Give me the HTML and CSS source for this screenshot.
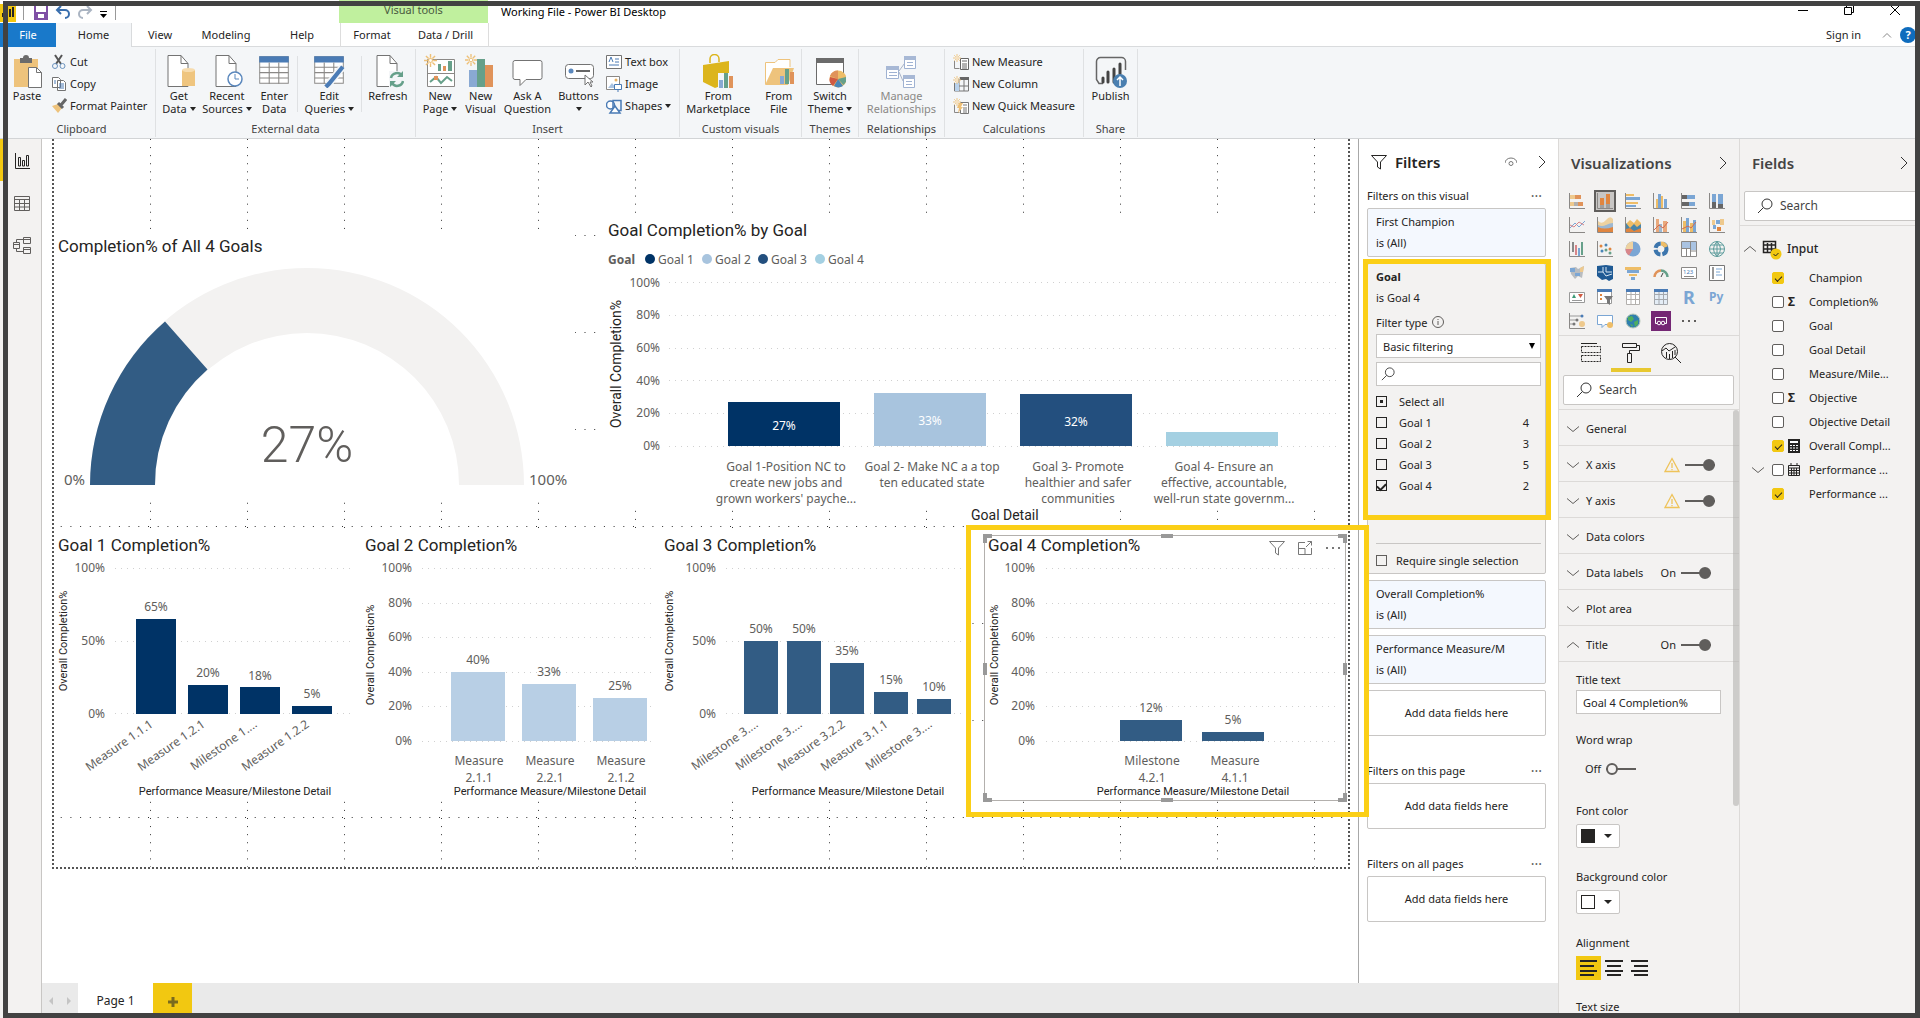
FILE: index.html
```html
<!DOCTYPE html>
<html lang="en">
<head>
	<meta charset="utf-8">
	<meta name="viewport" content="width=device-width, initial-scale=1.0">
	<title>Working File - Power BI Desktop</title>
	<link rel="stylesheet" href="styles.css">
</head>
<body>

<!-- shared icons -->
<svg class="defs" aria-hidden="true">
	<symbol id="down" viewBox="0 0 12 8"><path d="M0 1.500l6 5 6-5" fill="none" stroke="#605e5c"/></symbol>
	<symbol id="up" viewBox="0 0 12 8"><path d="M0 6.500l6-5 6 5" fill="none" stroke="#605e5c"/></symbol>
	<symbol id="right" viewBox="0 0 8 12"><path d="M1 0l6 6-6 6" fill="none" stroke="#333"/></symbol>
	<symbol id="glass" viewBox="0 0 16 16"><circle cx="10" cy="6" r="5" fill="none" stroke="#333"/><path d="M6.500 9.500L1 15" stroke="#333"/></symbol>
	<symbol id="funnel" viewBox="0 0 16 16"><path d="M.5 1.500h15L9.500 8v7L6.500 13V8z" fill="none" stroke="currentColor"/></symbol>
	<symbol id="warn" viewBox="0 0 16 16"><path d="M8 1.500l7 13H1z" fill="none" stroke="#eec35a" stroke-width="1.300"/><path d="M8 6v5M8 12v1.300" stroke="#eec35a" stroke-width="1.300"/></symbol>
	<symbol id="axes" viewBox="0 0 16 16"><path d="M.5 0v15.500H16" fill="none" stroke="#8a8886"/></symbol>
	<symbol id="star" viewBox="0 0 12 12"><path d="M6 0v3.500M6 8.500V12M0 6h3.500M8.500 6H12M1.800 1.800l2.400 2.400M7.800 7.800l2.400 2.400M10.200 1.800L7.800 4.200M4.200 7.800l-2.400 2.400" stroke="#eec077" stroke-width="1.300"/><circle cx="6" cy="6" r="1.800" fill="#fff" stroke="#eec077"/></symbol>
	<symbol id="page" viewBox="0 0 32 34"><path d="M5 1.500h13l7 8v23H5z" fill="#fff" stroke="#737373"/><path d="M18 1.500v8h7" fill="none" stroke="#737373"/></symbol>
	<symbol id="grid" viewBox="0 0 28 32"><path d="M.5 2.500h27v25H.5z" fill="#fff" stroke="#8a8886"/><path d="M0 2h28v6H0z" fill="#4a7bb5"/><path d="M.5 12.500h27m-27 5h27m-27 5h27M9.500 8v20M18.500 8v20" stroke="#8a8886" fill="none"/></symbol>
	<symbol id="minibars" viewBox="0 0 15 15"><path d="M0 7h4v8H0z" fill="#89a9d3"/><path d="M5 0h4v15H5z" fill="#66a08a"/><path d="M10 3h4v12h-4z" fill="#e0935a"/></symbol>
	<symbol id="calc" viewBox="0 0 12 14"><path d="M0 0h12v14H0z" fill="#252423"/><path d="M2 2h8v2H2zM2 6h2v1H2zm3 0h2v1H5zm3 0h2v1H8zM2 8.500h2v1H2zm3 0h2v1H5zm3 0h2v1H8zM2 11h2v1H2zm3 0h2v1H5zm3 0h2v1H8z" fill="#fff"/></symbol>
</svg>

<div class="app">
	<header class="titlebar">
		<svg class="quick" viewBox="0 0 120 23">
			<path d="M0 4h16v18H0z" fill="#f2c811"/><path d="M3 17v-4m3 4v-6m4 6V9m3 8V7" stroke="#252423" stroke-width="2"/>
			<path d="M23.500 6v14M115.500 6v14" stroke="#999"/>
			<path d="M35 6v13h12V6M37 19v-6h8v6" fill="none" stroke="#7f4fa5" stroke-width="2"/>
			<path d="M58 10h7a4 4 0 0 1 0 8M61 6l-4 4 4 4" fill="none" stroke="#3a6fae" stroke-width="2"/>
			<path d="M90 10h-7a4 4 0 0 0 0 8M87 6l4 4-4 4" fill="none" stroke="#aab4c2" stroke-width="2"/>
			<path d="M100 11.500h7" stroke="#000"/><path d="M100 14h7l-3.500 4z"/>
		</svg>
		<span class="tools">Visual tools</span>
		<span class="filename">Working File - Power BI Desktop</span>
		<div class="window">
			<button aria-label="Minimize"><svg viewBox="0 0 12 12"><path d="M1 6.500h10" stroke="#000"/></svg></button>
			<button aria-label="Restore"><svg viewBox="0 0 12 12"><path d="M1.500 3.500h7v7h-7zM3.500 3V1.500h7v7H9" fill="none" stroke="#000"/></svg></button>
			<button aria-label="Close"><svg viewBox="0 0 12 12"><path d="M1 1l10 10M11 1L1 11" stroke="#000"/></svg></button>
		</div>
	</header>

	<nav class="tabs">
		<button class="tab file">File</button>
		<button class="tab home">Home</button>
		<button class="tab view">View</button>
		<button class="tab wide">Modeling</button>
		<button class="tab wide">Help</button>
		<button class="tab context">Format</button>
		<button class="tab drill">Data / Drill</button>
		<div class="account">
			<a href="#">Sign in</a>
			<svg class="chev" viewBox="0 0 12 8"><path d="M2 6.500l4-4 4 4" fill="none" stroke="#888"/></svg>
			<button class="help">?</button>
		</div>
	</nav>

	<div class="ribbon">
		<section class="group clipboard">
			<div class="tools-row">
				<button class="big"><svg viewBox="0 0 32 34"><path d="M3 5h24v28H3z" fill="#eec37c"/><path d="M9 4h3a3 3 0 0 1 6 0h3v5H9z" fill="#6b6b6b"/><path d="M17.500 13.500h8l5 5v15h-13z" fill="#fff" stroke="#737373"/><path d="M25.500 13.500v5h5" fill="none" stroke="#737373"/></svg>Paste</button>
				<div class="stack">
					<button><svg viewBox="0 0 16 16"><path d="M4 1l6 9M11 1L5 10" stroke="#555" stroke-width="2"/><circle cx="4" cy="12" r="2.500" fill="none" stroke="#6b93bf"/><circle cx="11.500" cy="12" r="2.500" fill="none" stroke="#6b93bf"/></svg>Cut</button>
					<button><svg viewBox="0 0 16 16"><path d="M1.500 1.500h6l2 2v8h-8zM6.500 4.500h6l2 2v8h-8z" fill="#fff" stroke="#737373"/><path d="M3 5h2M3 7h2M8 8h5m-5 2h5m-5 2h5" stroke="#4a7bb5"/></svg>Copy</button>
					<button><svg viewBox="0 0 16 16"><path d="M1 8l6-2 4 4-4 5z" fill="#eec37c"/><path d="M7 5l5 5M10 7l5-6" stroke="#666" stroke-width="3"/></svg>Format Painter</button>
				</div>
			</div>
			<h2>Clipboard</h2>
		</section>
		<section class="group external">
			<div class="tools-row">
				<button class="big"><svg viewBox="0 0 32 34"><use href="#page"/><path d="M19 16h13v16H19z" fill="#efc57f"/><ellipse cx="25.500" cy="16" rx="6.500" ry="2" fill="#f7dcae"/></svg>Get<span>Data <i></i></span></button>
				<button class="big"><svg viewBox="0 0 32 34"><use href="#page"/><circle cx="24" cy="25" r="7" fill="#fff" stroke="#5b88bd" stroke-width="1.500"/><path d="M24 20v5h4" fill="none" stroke="#5b88bd"/></svg>Recent<span>Sources <i></i></span></button>
				<button class="big"><svg viewBox="0 0 28 32"><use href="#grid"/></svg>Enter<span>Data</span></button>
				<hr>
				<button class="big"><svg viewBox="0 0 28 32"><use href="#grid"/><path d="M27 12L13 29" stroke="#f4f6f8" stroke-width="7"/><path d="M27 12L14 28l-3 3" stroke="#4a7bb5" stroke-width="4"/></svg>Edit<span>Queries <i></i></span></button>
				<hr>
				<button class="big"><svg viewBox="0 0 32 34"><use href="#page"/><path d="M17 17h15v17H17z" fill="#f4f6f8"/><path d="M19 24a6 6 0 0 1 11-2M31 27a6 6 0 0 1-11 2" fill="none" stroke="#66a08a" stroke-width="2.500"/><path d="M31 17v6h-6zM18 33v-6h6z" fill="#66a08a"/></svg>Refresh</button>
			</div>
			<h2>External data</h2>
		</section>
		<section class="group insert">
			<div class="tools-row">
				<button class="big"><svg viewBox="0 0 32 34"><path d="M3.500 5.500h27v27h-27zM3 19.500h28" fill="#fff" stroke="#8a8886"/><path d="M6 28l6-5 5 6 6-6 5 4" fill="none" stroke="#66a08a" stroke-width="2"/><path d="M10 22h4v4h-4z" fill="#e0935a"/><path d="M14 10h3v7h-3zm10-3h4v10h-4z" fill="#66a08a"/><path d="M19 12h3v5h-3z" fill="#e0935a"/><use href="#star" x="0" y="0" width="13" height="13"/></svg>New<span>Page <i></i></span></button>
				<button class="big"><svg viewBox="0 0 32 34"><path d="M4 16h8v17H4z" fill="#89a9d3"/><path d="M12 5h8v28h-8z" fill="#66a08a"/><path d="M20 11h8v22h-8z" fill="#e0935a"/><use href="#star" x="0" y="0" width="12" height="12"/></svg>New<span>Visual</span></button>
				<button class="big"><svg viewBox="0 0 32 34"><path d="M4 6.500h25a2 2 0 0 1 2 2v15a2 2 0 0 1-2 2H15l-6 6v-6H4a2 2 0 0 1-2-2v-15a2 2 0 0 1 2-2z" fill="#fff" stroke="#737373"/></svg>Ask A<span>Question</span></button>
				<button class="big"><svg viewBox="0 0 32 34"><rect x="2.500" y="10.500" width="28" height="14" rx="3" fill="#fff" stroke="#737373"/><circle cx="8" cy="17" r="2.500" fill="#5b88bd"/><path d="M13 17h14" stroke="#666" stroke-width="2"/><path d="M22 21v10l3-3 3 5 1-1-2-4h3z" fill="#fff" stroke="#737373"/></svg>Buttons<span><i></i></span></button>
				<div class="stack">
					<button><svg viewBox="0 0 16 16"><path d="M.5 1.500h15v13H.5z" fill="#fff" stroke="#737373"/><path d="M3 8l2-5 2 5M9 5h4M9 8h4M3 11h10" fill="none" stroke="#4a7bb5"/></svg>Text box</button>
					<button><svg viewBox="0 0 16 16"><path d="M.5.5h13v13H.5z" fill="#fff" stroke="#8a8886"/><path d="M2 12l4-5 4 5z" fill="#a9c3e2"/><circle cx="10" cy="4" r="1.500" fill="#e8b063"/><path d="M8.500 8.500h7v5h-7zM12 14v2" fill="#fff" stroke="#4a7bb5"/></svg>Image</button>
					<button><svg viewBox="0 0 16 16"><circle cx="4.500" cy="7" r="4" fill="#fff" stroke="#4a7bb5" stroke-width="1.500"/><path d="M7 2.500h8v10H7z" fill="none" stroke="#4a7bb5" stroke-width="1.500"/><path d="M9 8l5 7H4z" fill="#fff" stroke="#4a7bb5" stroke-width="1.500"/></svg>Shapes <i></i></button>
				</div>
			</div>
			<h2>Insert</h2>
		</section>
		<section class="group custom">
			<div class="tools-row">
				<button class="big"><svg viewBox="0 0 32 34"><path d="M8 9V5a4 4 0 0 1 9 0v3" fill="none" stroke="#dcb51c" stroke-width="1.500"/><path d="M1 11l26-4v22l-14 5-12-6z" fill="#dcb51c"/><path d="M16 19h16v14H16z" fill="#f4f6f8"/><use href="#minibars" x="17" y="19" width="15" height="15"/></svg>From<span>Marketplace</span></button>
				<button class="big"><svg viewBox="0 0 32 34"><path d="M2.500 30V8.500H12l3-3h12V13" fill="#fff" stroke="#eec37c"/><path d="M2 31l8-17h21l-6 17z" fill="#eec37c"/><use href="#minibars" x="17" y="15" width="15" height="15"/></svg>From<span>File</span></button>
			</div>
			<h2>Custom visuals</h2>
		</section>
		<section class="group themes">
			<div class="tools-row">
				<button class="big"><svg viewBox="0 0 32 34"><path d="M2.500 4.500h27v26h-27z" fill="#fff" stroke="#6b6b6b"/><path d="M2 4h28v5H2z" fill="#6b6b6b"/><circle cx="24" cy="25" r="8.500" fill="#eebd67"/><path d="M24 25l-8-3a8.500 8.500 0 0 1 8-5.500z" fill="#e0935a"/><path d="M24 25l8.500-2a9 9 0 0 1-3 8z" fill="#66a08a"/><path d="M24 25l5 7a8.500 8.500 0 0 1-9 0z" fill="#4a86b8"/><path d="M24 25l-5 7a8 8 0 0 1-3-9z" fill="#d05a42"/></svg>Switch<span>Theme <i></i></span></button>
			</div>
			<h2>Themes</h2>
		</section>
		<section class="group relations">
			<div class="tools-row">
				<button class="big muted" disabled><svg viewBox="0 0 32 34"><path d="M14 17l8-11M14 18l4 9" stroke="#a9b4c8"/><path d="M1.500 12.500h12v12h-12zM19.500 2.500h11v12h-11zM18.500 21.500h11v12h-11z" fill="#fff" stroke="#9fb2d2"/><path d="M1 12h13v4H1zM19 2h12v4H19zM18 21h12v4H18z" fill="#a7b8d5"/><path d="M4 18.500h8m-8 3h8M22 8.500h6m-6 3h6M21 27.500h6m-6 3h6" stroke="#9fb2d2"/></svg>Manage<span>Relationships</span></button>
			</div>
			<h2>Relationships</h2>
		</section>
		<section class="group calcs">
			<div class="tools-row">
				<div class="stack">
					<button><svg viewBox="0 0 16 16"><path d="M1.500 7v7.500h5" fill="none" stroke="#8a8886"/><path d="M7.500 4.500h8v11h-8z" fill="#fff" stroke="#666"/><path d="M9 7h5M9 10h5m-5 2h5m-5 2h5" stroke="#666"/><use href="#star" width="8" height="8"/></svg>New Measure</button>
					<button><svg viewBox="0 0 16 16"><path d="M1.500 7v8h14V3h-9M6 15V3M1.500 10h14M11 3v12" fill="none" stroke="#777"/><path d="M2 7h4v8H2z" fill="#b9d2ec"/><path d="M7 1h9v3H7z" fill="#666"/><use href="#star" width="8" height="8"/></svg>New Column</button>
					<button><svg viewBox="0 0 16 16"><path d="M1.500 7v7.500h5" fill="none" stroke="#8a8886"/><path d="M7.500 4.500h8v11h-8z" fill="#fff" stroke="#777"/><path d="M10 7h4m-4 3h4m-4 2h4m-4 2h4" stroke="#777"/><path d="M6 5l4 0-2 4h2l-5 6 1-5H4z" fill="#eec077"/><use href="#star" width="8" height="8"/></svg>New Quick Measure</button>
				</div>
			</div>
			<h2>Calculations</h2>
		</section>
		<section class="group share">
			<div class="tools-row">
				<button class="big"><svg viewBox="0 0 32 34"><path d="M8 29.500H4l-2.500-4v-18a4 4 0 0 1 4-4h21a4 4 0 0 1 4 4V16" fill="none" stroke="#666" stroke-width="1.500"/><path d="M8 28v-4m5 4V18m6 10V15m6 5V10" stroke="#444" stroke-width="3" stroke-linecap="round"/><circle cx="25" cy="27" r="7" fill="#4a7fb0"/><path d="M25 32v-9m-3 3l3-3 3 3" fill="none" stroke="#fff" stroke-width="1.500"/></svg>Publish</button>
			</div>
			<h2>Share</h2>
		</section>
	</div>

	<div class="body">
		<nav class="views">
			<button aria-label="Report"><svg viewBox="0 0 18 18"><path d="M2.500 1v15.500H17M5.500 14V5.500h2V14zM9.500 14V8.500h2V14zM13.500 14V3.500h2V14z" fill="none" stroke="#252423"/></svg></button>
			<button aria-label="Data"><svg viewBox="0 0 18 18"><path d="M1.500 2.500h15v14h-15zM1.500 5.500h15m-15 4h15m-15 3.500h15M6.500 5v11M11.500 5v11" fill="none" stroke="#605e5c"/></svg></button>
			<button aria-label="Model"><svg viewBox="0 0 18 18"><path d="M.5 6.500h6v6h-6zM10.500 1.500h7v6h-7zM10.500 11.500h7v6h-7zM.5 8.500h6M10.500 3.500h7M10.500 13.500h7M3.500 6V3.500h7M3.500 13v2.500h7" fill="none" stroke="#605e5c"/></svg></button>
		</nav>

		<div class="center">
			<div class="work">
				<main class="canvas">
					<div class="report">
						<svg class="snap" aria-hidden="true">
							<pattern id="dots" x="0" y="0" width="97" height="97" patternUnits="userSpaceOnUse">
								<path d="M96.500 0v97" stroke="#333" stroke-dasharray="1 7.083" stroke-dashoffset="0"/>
								<path d="M0 97h97" stroke="#333" stroke-width="2" stroke-dasharray="1 8.700" stroke-dashoffset="3"/>
							</pattern>
							<rect width="100%" height="100%" fill="url(#dots)"/>
						</svg>

						<div class="top-row">
							<article class="visual gauge">
								<h3>Completion% of All 4 Goals</h3>
								<svg class="chart" viewBox="54 259 521 241">
									<path d="M90 485a217 217 0 0 1 434 0h-65a152 152 0 0 0-304 0z" fill="#f3f2f1"/>
									<path d="M90 485a217 217 0 0 1 75-163.500l42.500 48A152 152 0 0 0 155 485z" fill="#325c84"/>
									<text x="307" y="462" class="callout mid">27%</text>
									<text x="85" y="485" class="limit end">0%</text>
									<text x="529" y="485" class="limit">100%</text>
								</svg>
							</article>

							<article class="visual by-goal">
								<h3>Goal Completion% by Goal</h3>
								<svg class="chart" viewBox="602 245 746 260">
									<g class="legend">
										<text x="608" y="264" class="bold">Goal</text>
										<circle cx="650" cy="259" r="5" fill="#036"/><text x="658" y="264">Goal 1</text>
										<circle cx="707" cy="259" r="5" fill="#a8c4de"/><text x="715" y="264">Goal 2</text>
										<circle cx="763" cy="259" r="5" fill="#234f7e"/><text x="771" y="264">Goal 3</text>
										<circle cx="820" cy="259" r="5" fill="#a4d0e2"/><text x="828" y="264">Goal 4</text>
									</g>
									<path class="lines" d="M669 282.500h672M669 315.500h672M669 348.500h672M669 380.500h672M669 413.500h672M669 446.500h672"/>
									<g class="end">
										<text x="660" y="287">100%</text><text x="660" y="319">80%</text><text x="660" y="352">60%</text>
										<text x="660" y="385">40%</text><text x="660" y="417">20%</text><text x="660" y="450">0%</text>
									</g>
									<text class="ytitle large" transform="translate(621 364) rotate(-90)">Overall Completion%</text>
									<path d="M728 402h112v44H728z" fill="#036"/>
									<path d="M874 393h112v53H874z" fill="#a8c4de"/>
									<path d="M1020 394h112v52h-112z" fill="#234f7e"/>
									<path d="M1166 432h112v14h-112z" fill="#a4d0e2"/>
									<g class="mid white"><text x="784" y="430">27%</text><text x="930" y="425">33%</text><text x="1076" y="426">32%</text></g>
									<g class="mid">
										<text x="786" y="471">Goal 1-Position NC to</text><text x="786" y="487">create new jobs and</text><text x="786" y="503">grown workers' payche...</text>
										<text x="932" y="471">Goal 2- Make NC a a top</text><text x="932" y="487">ten educated state</text>
										<text x="1078" y="471">Goal 3- Promote</text><text x="1078" y="487">healthier and safer</text><text x="1078" y="503">communities</text>
										<text x="1224" y="471">Goal 4- Ensure an</text><text x="1224" y="487">effective, accountable,</text><text x="1224" y="503">well-run state governm...</text>
									</g>
								</svg>
							</article>
						</div>

						<div class="bottom-row">
							<article class="visual goal1">
								<h3>Goal 1 Completion%</h3>
								<svg class="chart" viewBox="54 560 307 241">
									<path class="lines" d="M115 568.500h239M115 641.500h239M115 713.500h239"/>
									<g class="end"><text x="105" y="572">100%</text><text x="105" y="645">50%</text><text x="105" y="718">0%</text></g>
									<text class="ytitle" transform="translate(67 641) rotate(-90)">Overall Completion%</text>
									<path d="M136 619h40v95h-40zM188 685h40v29h-40zM240 687h40v27h-40zM292 706h40v8h-40z" fill="#036"/>
									<g class="mid"><text x="156" y="611">65%</text><text x="208" y="677">20%</text><text x="260" y="680">18%</text><text x="312" y="698">5%</text></g>
									<g class="end">
										<text transform="translate(154 726) rotate(-35)">Measure 1.1.1</text>
										<text transform="translate(206 726) rotate(-35)">Measure 1.2.1</text>
										<text transform="translate(258 726) rotate(-35)">Milestone 1....</text>
										<text transform="translate(310 726) rotate(-35)">Measure 1.2.2</text>
									</g>
									<text class="xtitle" x="235" y="795">Performance Measure/Milestone Detail</text>
								</svg>
							</article>

							<article class="visual goal2">
								<h3>Goal 2 Completion%</h3>
								<svg class="chart" viewBox="361 560 299 241">
									<path class="lines" d="M422 568.500h233M422 603.500h233M422 637.500h233M422 672.500h233M422 706.500h233M422 741.500h233"/>
									<g class="end"><text x="412" y="572">100%</text><text x="412" y="607">80%</text><text x="412" y="641">60%</text><text x="412" y="676">40%</text><text x="412" y="710">20%</text><text x="412" y="745">0%</text></g>
									<text class="ytitle" transform="translate(374 655) rotate(-90)">Overall Completion%</text>
									<path d="M451 672h54v69h-54zM522 684h54v57h-54zM593 698h54v43h-54z" fill="#b8cfe5"/>
									<g class="mid"><text x="478" y="664">40%</text><text x="549" y="676">33%</text><text x="620" y="690">25%</text>
										<text x="479" y="765">Measure</text><text x="479" y="782">2.1.1</text>
										<text x="550" y="765">Measure</text><text x="550" y="782">2.2.1</text>
										<text x="621" y="765">Measure</text><text x="621" y="782">2.1.2</text></g>
									<text class="xtitle" x="550" y="795">Performance Measure/Milestone Detail</text>
								</svg>
							</article>

							<article class="visual goal3">
								<h3>Goal 3 Completion%</h3>
								<svg class="chart" viewBox="660 560 309 241">
									<path class="lines" d="M726 568.500h238M726 641.500h238M726 713.500h238"/>
									<g class="end"><text x="716" y="572">100%</text><text x="716" y="645">50%</text><text x="716" y="718">0%</text></g>
									<text class="ytitle" transform="translate(673 641) rotate(-90)">Overall Completion%</text>
									<path d="M744 641h34v73h-34zM787 641h34v73h-34zM830 663h34v51h-34zM874 692h34v22h-34zM917 699h34v15h-34z" fill="#325c84"/>
									<g class="mid"><text x="761" y="633">50%</text><text x="804" y="633">50%</text><text x="847" y="655">35%</text><text x="891" y="684">15%</text><text x="934" y="691">10%</text></g>
									<g class="end">
										<text transform="translate(759 726) rotate(-35)">Milestone 3....</text>
										<text transform="translate(803 726) rotate(-35)">Milestone 3....</text>
										<text transform="translate(846 726) rotate(-35)">Measure 3.2.2</text>
										<text transform="translate(889 726) rotate(-35)">Measure 3.1.1</text>
										<text transform="translate(933 726) rotate(-35)">Milestone 3....</text>
									</g>
									<text class="xtitle" x="848" y="795">Performance Measure/Milestone Detail</text>
								</svg>
							</article>

							<div class="detail">
								<p>Goal Detail</p>
								<article class="visual selected">
									<header>
										<h3>Goal 4 Completion%</h3>
										<svg class="icon16" viewBox="0 0 16 16"><use href="#funnel"/></svg>
										<svg class="icon16" viewBox="0 0 16 16"><path d="M8 2.500H1.500v12h13V8M1.500 8.500H8v6M9 7l5.500-5.500M10.500 1.500h4v4" fill="none" stroke="currentColor"/></svg>
										<svg class="icon16" viewBox="0 0 16 16"><path d="M1 7h2v2H1zm6 0h2v2H7zm6 0h2v2h-2z" fill="#777"/></svg>
									</header>
									<svg class="chart" viewBox="985 560 360 240">
										<path class="lines" d="M1046 568.500h294M1046 603.500h294M1046 637.500h294M1046 672.500h294M1046 706.500h294M1046 741.500h294"/>
										<g class="end"><text x="1035" y="572">100%</text><text x="1035" y="607">80%</text><text x="1035" y="641">60%</text><text x="1035" y="676">40%</text><text x="1035" y="710">20%</text><text x="1035" y="745">0%</text></g>
										<text class="ytitle" transform="translate(998 655) rotate(-90)">Overall Completion%</text>
										<path d="M1120 720h62v21h-62zM1202 732h62v9h-62z" fill="#325c84"/>
										<g class="mid"><text x="1151" y="712">12%</text><text x="1233" y="724">5%</text>
											<text x="1152" y="765">Milestone</text><text x="1152" y="782">4.2.1</text>
											<text x="1235" y="765">Measure</text><text x="1235" y="782">4.1.1</text></g>
										<text class="xtitle" x="1193" y="795">Performance Measure/Milestone Detail</text>
									</svg>
									<b class="handle tl"></b><b class="handle tm"></b><b class="handle tr"></b>
									<b class="handle ml"></b><b class="handle mr"></b>
									<b class="handle bl"></b><b class="handle bm"></b><b class="handle br"></b>
									<div class="mark chart-mark"></div>
								</article>
							</div>
						</div>
					</div>
				</main>

				<aside class="filters">
					<header>
						<svg class="icon16" viewBox="0 0 16 16"><use href="#funnel"/></svg>
						<h2>Filters</h2>
						<svg class="icon12" viewBox="0 0 12 12"><path d="M0 7a6 5 0 0 1 12 0" fill="none" stroke="#777"/><circle cx="6" cy="7.500" r="2" fill="none" stroke="#777"/></svg>
						<svg class="chev-r" viewBox="0 0 8 12"><use href="#right"/></svg>
					</header>
					<h4>Filters on this visual <span>···</span></h4>
					<div class="card"><p>First Champion</p><p>is (All)</p></div>
					<div class="card open">
						<p class="bold">Goal</p>
						<p>is Goal 4</p>
						<label class="type" for="ftype">Filter type <svg viewBox="0 0 12 12"><circle cx="6" cy="6" r="5.500" fill="none" stroke="#605e5c"/><path d="M6 5v4M6 3v1" stroke="#605e5c"/></svg></label>
						<div class="select"><select id="ftype"><option>Basic filtering</option></select></div>
						<div class="search small"><svg viewBox="0 0 16 16"><use href="#glass"/></svg><input type="text" aria-label="Search values"></div>
						<div class="list">
							<label><input type="checkbox" class="box some">Select all</label>
							<label><input type="checkbox" class="box">Goal 1<span>4</span></label>
							<label><input type="checkbox" class="box">Goal 2<span>3</span></label>
							<label><input type="checkbox" class="box">Goal 3<span>5</span></label>
							<label><input type="checkbox" class="box" checked>Goal 4<span>2</span></label>
						</div>
						<label class="single"><input type="checkbox" class="box thin">Require single selection</label>
						<div class="mark filter-mark"></div>
					</div>
					<div class="card"><p>Overall Completion%</p><p>is (All)</p></div>
					<div class="card"><p class="clip">Performance Measure/M</p><p>is (All)</p></div>
					<div class="card drop">Add data fields here</div>
					<h4>Filters on this page <span>···</span></h4>
					<div class="card drop">Add data fields here</div>
					<h4>Filters on all pages <span>···</span></h4>
					<div class="card drop">Add data fields here</div>
				</aside>
			</div>

			<footer class="pages">
				<button class="arrow" aria-label="Previous page"><svg viewBox="0 0 6 8"><path d="M5 0v8L1 4z" fill="#c4c4c4"/></svg></button>
				<button class="arrow" aria-label="Next page"><svg viewBox="0 0 6 8"><path d="M1 0v8l4-4z" fill="#c4c4c4"/></svg></button>
				<button class="pagetab">Page 1</button>
				<button class="add" aria-label="New page"><svg viewBox="0 0 12 12"><path d="M6 1v10M1 6h10" stroke="#7a6b1e" stroke-width="3"/></svg></button>
			</footer>
		</div>

		<aside class="viz">
			<header><h2>Visualizations</h2><svg class="chev-r" viewBox="0 0 8 12"><use href="#right"/></svg></header>
			<div class="palette">
				<svg viewBox="0 0 16 16"><use href="#axes"/><path d="M1 2h5v4H1zM1 9h4v4H1z" fill="#eec98d"/><path d="M6 2h6v4H6zM9 9h5v4H9z" fill="#e0935a"/><path d="M5 9h4v4H5z" fill="#b3b0ad"/></svg>
				<svg class="on" viewBox="0 0 16 16"><use href="#axes"/><path d="M3 5h4v7H3zM9 1h4v10H9z" fill="#e0853f"/><path d="M3 12h4v3H3zM9 11h4v4H9z" fill="#a19f9d"/></svg>
				<svg viewBox="0 0 16 16"><use href="#axes"/><path d="M1 1h8v2H1zM1 9h12v2H1z" fill="#eebd67"/><path d="M1 4h14v3H1zM1 12h10v2H1z" fill="#7ba6d4"/></svg>
				<svg viewBox="0 0 16 16"><use href="#axes"/><path d="M3 6h2v9H3zM8 3h2v12H8z" fill="#eebd67"/><path d="M5 1h3v14H5zM11 6h3v9h-3z" fill="#7ba6d4"/></svg>
				<svg viewBox="0 0 16 16"><use href="#axes"/><path d="M1 2h5v4H1zM1 9h7v4H1z" fill="#666"/><path d="M6 2h8v4H6zM8 9h6v4H8z" fill="#7ba6d4"/></svg>
				<svg viewBox="0 0 16 16"><use href="#axes"/><path d="M3 1h4v8H3zM9 1h5v10H9z" fill="#7ba6d4"/><path d="M3 9h4v6H3zM9 11h5v4H9z" fill="#666"/></svg>

				<svg viewBox="0 0 16 16"><use href="#axes"/><path d="M1 11l5-5 4 4 6-6" fill="none" stroke="#7ba6d4"/><path d="M1 8l4 2 5-5 5 3" fill="none" stroke="#d9868a"/></svg>
				<svg viewBox="0 0 16 16"><use href="#axes"/><path d="M1 4q4 4 8-1t7-1v12H1z" fill="#eed2a0"/><path d="M1 8q4 2 8 0t7-2v9H1z" fill="#9db8d2"/><path d="M1 10q6 3 15 0v5H1z" fill="#e0853f"/></svg>
				<svg viewBox="0 0 16 16"><use href="#axes"/><path d="M1 7l4-4 4 3 3-4 4 4v9H1z" fill="#eebd67"/><path d="M1 6l4 5 4-4 3 3 4-3v5l-5 2H1z" fill="#4a86a8"/><path d="M1 12l4-1 4 3 7-3v4H1z" fill="#e0853f"/></svg>
				<svg viewBox="0 0 16 16"><use href="#axes"/><path d="M3 2h3v13H3zM10 4h4v11h-4z" fill="#e9a97c"/><path d="M6 7h3v8H6z" fill="#9db8d2"/><path d="M1 13l5-5 4 3 5-6" fill="none" stroke="#d06a52"/></svg>
				<svg viewBox="0 0 16 16"><use href="#axes"/><path d="M2 4h3v11H2zM9 6h3v9H9z" fill="#eebd67"/><path d="M5 1h3v14H5zM12 3h3v12h-3z" fill="#7ba6d4"/><path d="M1 12l6-3 3 2 5-6" fill="none" stroke="#d06a52"/></svg>
				<svg viewBox="0 0 16 16"><use href="#axes"/><path d="M3 3h3v5H3zM11 2h4v6h-4z" fill="#eec98d"/><path d="M4 8h3v4H4zM7 3h4v4H7z" fill="#7ba6d4"/><path d="M8 10h4v4H8z" fill="#e0853f"/></svg>

				<svg viewBox="0 0 16 16"><use href="#axes"/><path d="M3 1h2v10H3z" fill="#888"/><path d="M6 4h2v10H6z" fill="#d9868a"/><path d="M9 7h2v8H9z" fill="#7ba6d4"/><path d="M12 1h2v13h-2z" fill="#66a08a"/></svg>
				<svg viewBox="0 0 16 16"><use href="#axes"/><g fill="#e0853f"><circle cx="4" cy="5" r="1.500"/><circle cx="13" cy="8" r="1.500"/></g><g fill="#4a86b8"><circle cx="9" cy="4" r="1.500"/><circle cx="5" cy="10" r="1.500"/></g><g fill="#66a08a"><circle cx="9" cy="9" r="1.500"/><circle cx="13" cy="12" r="1.500"/></g></svg>
				<svg viewBox="0 0 16 16"><circle cx="8" cy="8" r="7.500" fill="#7ba6d4"/><path d="M8 8V.5A7.500 7.500 0 0 0 .5 8z" fill="#eed2a0"/><path d="M8 8H.5A7.500 7.500 0 0 0 4 14.500z" fill="#d9868a"/></svg>
				<svg viewBox="0 0 16 16"><circle cx="8" cy="8" r="5.500" fill="none" stroke="#3d76ad" stroke-width="4" stroke-dasharray="7 2"/><path d="M8 2.500A5.500 5.500 0 0 1 13 6" fill="none" stroke="#eebd67" stroke-width="4"/></svg>
				<svg viewBox="0 0 16 16"><path d="M.5.500h15v15H.5z" fill="#fff" stroke="#8a8886"/><path d="M1 1h8v6H1zM10 1h5v8h-5z" fill="#a9c3e2"/><path d="M9.500 0v16M0 7.500h9.500M5.500 8v7M9.500 10h6" stroke="#8a8886"/></svg>
				<svg viewBox="0 0 16 16"><path d="M8 .5a7.500 7.500 0 1 0 0 15 7.500 7.500 0 0 0 0-15zM8 .5v15M.5 8h15M2 4h12M2 12h12M8 .5q-7 7.500 0 15M8 .5q7 7.500 0 15" fill="none" stroke="#5c9c9c"/></svg>

				<svg viewBox="0 0 16 16"><path d="M1 3l6-1 2 2 6-3-1 6-1 6-4-2-3 3-4-5z" fill="#b8bcc0"/><path d="M1 3h5v4H1z" fill="#7ba6d4"/><path d="M11 3l4-2-1 6h-3z" fill="#eec98d"/><path d="M6 8h5v3H6z" fill="#7ba6d4"/></svg>
				<svg viewBox="0 0 16 16"><path d="M0 1l9-1 7 1v13l-4 2-3-2-4 1-5-4z" fill="#1f5a94"/><path d="M1 7h5V2M6 7l3 4 6-2M9 2v5h6" fill="none" stroke="#d8e6f2"/></svg>
				<svg viewBox="0 0 16 16"><path d="M0 2h16v3H0zM4 9h8v2H4z" fill="#eebd67"/><path d="M2 5h12v3H2zM6 12h4v3H6z" fill="#7ba6d4"/></svg>
				<svg viewBox="0 0 16 16"><path d="M1.500 12A6.500 6.500 0 0 1 8 5.500" fill="none" stroke="#e0935a" stroke-width="2.500"/><path d="M8 5.500A6.500 6.500 0 0 1 14.500 12" fill="none" stroke="#66a08a" stroke-width="2.500"/><path d="M8 12l2-4" stroke="#444"/></svg>
				<svg viewBox="0 0 16 16"><path d="M.5 2.500h15v11H.5zM3 11.500h10" fill="#fff" stroke="#8a8886"/><text x="2" y="9" class="tiny">123</text></svg>
				<svg viewBox="0 0 16 16"><path d="M.5.500h15v15H.5z" fill="#fff" stroke="#777"/><path d="M3 2h2v12H3z" fill="#999"/><path d="M7 4h6M7 7h4M7 10h6" stroke="#7ba6d4"/></svg>

				<svg viewBox="0 0 16 16"><path d="M.5 3.500h15v10H.5zM3 11.500h10" fill="#fff" stroke="#999"/><path d="M3 9l2-4 2 4z" fill="#3d9a76"/><path d="M9 5h5l-2.500 4z" fill="#d05a42"/></svg>
				<svg viewBox="0 0 16 16"><path d="M.5 1.500h14v13H.5z" fill="#fff" stroke="#999"/><path d="M0 0h15v3H0z" fill="#4a7bb5"/><path d="M3 5h2v2H3zm0 4h2v2H3z" fill="#e0853f"/><path d="M7 7h9l-3 4v5l-3-2v-3z" fill="#777"/></svg>
				<svg viewBox="0 0 16 16"><path d="M1.500.500h13v15h-13zM1.500 5.500h13m-13 5h13M6 2v13M10.500 2v13" fill="#fff" stroke="#b3b0ad"/><path d="M1 0h14v3H1z" fill="#4a7bb5"/></svg>
				<svg viewBox="0 0 16 16"><path d="M1.500.500h13v15h-13zM1.500 5.500h13m-13 5h13M6 2v13M10.500 2v13" fill="#e4edf6" stroke="#a4a8ad"/><path d="M1 0h14v3H1z" fill="#4a7bb5"/></svg>
				<svg viewBox="0 0 16 16"><text x="2" y="15" class="glyph r">R</text></svg>
				<svg viewBox="0 0 16 16"><text x="0" y="12" class="glyph">Py</text></svg>

				<svg viewBox="0 0 16 16"><use href="#axes"/><path d="M1 3h12M1 7h7M1 11h4" stroke="#999"/><circle cx="13" cy="3" r="1.500" fill="#4a7bb5"/><circle cx="8" cy="7" r="1.500" fill="#777"/><circle cx="5" cy="11" r="1.500" fill="#777"/><circle cx="13" cy="11" r="3" fill="#eec98d"/></svg>
				<svg viewBox="0 0 16 16"><path d="M.5 2.500h15v9H8l-3 3v-3H.5z" fill="#fff" stroke="#7ba6d4"/><circle cx="13" cy="12" r="3" fill="#eebd67"/></svg>
				<svg viewBox="0 0 16 16"><circle cx="8" cy="8" r="7" fill="#2f7fae" stroke="#b9c9b9"/><path d="M3 4l4-1 2 3-3 3-3-2zM9 9l4-2v4l-3 3zM5 11l3 1-1 2z" fill="#4fae5e"/></svg>
				<svg class="apps" viewBox="0 0 20 20"><path d="M0 0h20v20H0z" fill="#742774"/><path d="M6 12.500H4.500v-6h11v6H14" fill="none" stroke="#fff"/><circle cx="8" cy="12" r="1.800" fill="none" stroke="#fff"/><circle cx="12" cy="12" r="1.800" fill="none" stroke="#fff"/></svg>
				<svg viewBox="0 0 16 16"><path d="M1 7h2v2H1zm6 0h2v2H7zm6 0h2v2h-2z" fill="#605e5c"/></svg>
			</div>
			<div class="modes">
				<button aria-label="Fields"><svg viewBox="0 0 20 20"><path d="M0 .5h16" stroke="#252423"/><path d="M.5 3.500h19v6H.5zM.5 12.500h19v6H.5z" fill="none" stroke="#252423" stroke-dasharray="2 1"/></svg></button>
				<button class="on" aria-label="Format"><svg viewBox="0 0 20 20"><path d="M1.500.500h14v4h-14zM15.500 2.500h3v5h-10v3M6.500 10.500h4v9h-4z" fill="none" stroke="#252423"/></svg></button>
				<button aria-label="Analytics"><svg viewBox="0 0 20 20"><circle cx="8.500" cy="8.500" r="8" fill="none" stroke="#252423"/><path d="M14 14l6 6M1 8l4-3 3 3 6-4M5.500 15V9M8.500 16v-5M11.500 15V8M14 12V7" fill="none" stroke="#252423"/></svg></button>
			</div>
			<div class="search"><svg viewBox="0 0 16 16"><use href="#glass"/></svg><input type="text" placeholder="Search" aria-label="Search format options"></div>
			<div class="options">
				<div class="option"><svg class="chev"><use href="#down"/></svg>General</div>
				<div class="option"><svg class="chev"><use href="#down"/></svg>X axis<span class="set"><svg class="icon16" viewBox="0 0 16 16"><use href="#warn"/></svg><input type="checkbox" class="toggle" aria-label="X axis" checked></span></div>
				<div class="option"><svg class="chev"><use href="#down"/></svg>Y axis<span class="set"><svg class="icon16" viewBox="0 0 16 16"><use href="#warn"/></svg><input type="checkbox" class="toggle" aria-label="Y axis" checked></span></div>
				<div class="option"><svg class="chev"><use href="#down"/></svg>Data colors</div>
				<div class="option"><svg class="chev"><use href="#down"/></svg>Data labels<label class="set on-label">On<input type="checkbox" class="toggle" checked></label></div>
				<div class="option"><svg class="chev"><use href="#down"/></svg>Plot area</div>
				<div class="option"><svg class="chev"><use href="#up"/></svg>Title<label class="set on-label">On<input type="checkbox" class="toggle" checked></label></div>
				<div class="scroll"></div>
			</div>
			<div class="title-form">
				<label for="ttext">Title text</label>
				<input type="text" id="ttext" value="Goal 4 Completion%">
				<p>Word wrap</p>
				<label class="wrap">Off<input type="checkbox" class="toggle"></label>
				<p>Font color</p>
				<button class="color" aria-label="Font color"><b class="dark"></b><i></i></button>
				<p>Background color</p>
				<button class="color" aria-label="Background color"><b></b><i></i></button>
				<p>Alignment</p>
				<div class="align">
					<button class="on" aria-label="Left"><svg viewBox="0 0 18 18"><path d="M0 2h17M0 7h14M0 12h17M0 16h14" stroke="#252423" stroke-width="2"/></svg></button>
					<button aria-label="Center"><svg viewBox="0 0 18 18"><path d="M0 2h18M2 7h14M0 12h18M2 16h14" stroke="#252423" stroke-width="2"/></svg></button>
					<button aria-label="Right"><svg viewBox="0 0 18 18"><path d="M1 2h17M4 7h14M1 12h17M4 16h14" stroke="#252423" stroke-width="2"/></svg></button>
				</div>
				<p>Text size</p>
			</div>
		</aside>

		<aside class="fields">
			<header><h2>Fields</h2><svg class="chev-r" viewBox="0 0 8 12"><use href="#right"/></svg></header>
			<div class="search"><svg viewBox="0 0 16 16"><use href="#glass"/></svg><input type="text" placeholder="Search" aria-label="Search fields"></div>
			<div class="tree">
				<h3><svg class="chev"><use href="#up"/></svg><svg class="table" viewBox="0 0 20 20"><path d="M1.500 1.500h12v11h-12zM1.500 5h12m-12 4h12M5.500 3v10M9.500 3v10" fill="none" stroke="#252423" stroke-width="1.500"/><circle cx="14" cy="14" r="5.500" fill="#f2c811"/><path d="M11.500 14l2 2 3-3" fill="none" stroke="#252423"/></svg>Input</h3>
				<label><span></span><input type="checkbox" class="tick" checked><em></em>Champion</label>
				<label><span></span><input type="checkbox" class="tick"><em>Σ</em>Completion%</label>
				<label><span></span><input type="checkbox" class="tick"><em></em>Goal</label>
				<label><span></span><input type="checkbox" class="tick"><em></em>Goal Detail</label>
				<label><span></span><input type="checkbox" class="tick"><em></em>Measure/Mile...</label>
				<label><span></span><input type="checkbox" class="tick"><em>Σ</em>Objective</label>
				<label><span></span><input type="checkbox" class="tick"><em></em>Objective Detail</label>
				<label><span></span><input type="checkbox" class="tick" checked><em><svg viewBox="0 0 12 14"><use href="#calc"/></svg></em>Overall Compl...</label>
				<label><span><svg class="chev"><use href="#down"/></svg></span><input type="checkbox" class="tick"><em><svg viewBox="0 0 12 14"><path d="M.5 2.500h11v10H.5zM0 5h12M0 7.500h12M0 10h12M3.500 5v7M6 5v7M8.500 5v7M3 0v3M9 0v3" fill="none" stroke="#252423"/></svg></em>Performance ...</label>
				<label><span></span><input type="checkbox" class="tick" checked><em></em>Performance ...</label>
			</div>
		</aside>
	</div>

	<div class="view-marker"></div>
	<div class="frame"></div>
</div>
</body>
</html>
```
FILE: styles.css
```css
*, *::before, *::after {
	box-sizing: border-box;
	margin: 0;
	padding: 0;
}

body {
	font: 11px/16px "Noto Sans", "Open Sans", sans-serif;
	color: #252423;
	background-color: #fff;
}

button, input, select {
	font: inherit;
	color: inherit;
	border: 0;
	background: none;
	border-radius: 0;
}

svg {
	display: block;
	flex: none;
}

a {
	color: inherit;
	text-decoration: none;
}

.defs {
	position: absolute;
	width: 0;
	height: 0;
}

.app {
	position: relative;
	display: flex;
	flex-direction: column;
	height: 100vh;
	overflow: hidden;
}

/* thick screen border drawn over everything */
.frame {
	position: absolute;
	inset: 1px 0 0 3px;
	border: 5px solid #424242;
	pointer-events: none;
	z-index: 10;
}

.view-marker {
	position: absolute;
	left: 0;
	top: 139px;
	width: 4px;
	height: 42px;
	background-color: #f2c811;
}

.mark {
	position: absolute;
	border: 5px solid #fbcf16;
	pointer-events: none;
	z-index: 5;
}

/* title bar and tabs */
.titlebar {
	display: flex;
	height: 23px;
	line-height: 24px;
}

.quick {
	width: 120px;
	height: 23px;
	margin-right: 219px;
}

.tools {
	width: 149px;
	background-color: #c0f09e;
	text-align: center;
	line-height: 20px;
	color: #4a5a40;
}

.filename {
	padding-left: 13px;
	color: #000;
}

.window {
	display: flex;
	margin-left: auto;
	padding-right: 2px;
}

.window button {
	width: 46px;
	height: 20px;
}

.window svg {
	width: 12px;
	height: 12px;
	margin: 4px auto;
}

.tabs {
	display: flex;
	height: 24px;
	border-bottom: 1px solid #d9dbdd;
}

.tab {
	height: 24px;
}

.file {
	width: 56px;
	background-color: #1979ca;
	color: #fff;
}

.home {
	width: 76px;
	background-color: #f4f6f8;
	border-right: 1px solid #d9dbdd;
}

.view {
	width: 56px;
}

.wide {
	width: 76px;
}

.context {
	width: 63px;
	border-left: 1px solid #ddd;
}

.drill {
	width: 86px;
	border-right: 1px solid #ddd;
}

.account {
	display: flex;
	align-items: center;
	gap: 20px;
	margin-left: auto;
	padding-right: 4px;
}

.help {
	width: 16px;
	height: 16px;
	margin-left: -13px;
	border-radius: 50%;
	background-color: #0f6cbd;
	color: #fff;
	font-weight: bold;
}

.chev {
	width: 12px;
	height: 8px;
}

.chev-r {
	width: 8px;
	height: 12px;
}

.icon16 {
	width: 16px;
	height: 16px;
}

.icon12 {
	width: 12px;
	height: 12px;
}

/* ribbon */
.ribbon {
	display: flex;
	height: 92px;
	padding-left: 8px;
	background-color: #f4f6f8;
	border-bottom: 1px solid #d2d4d6;
}

.group {
	display: flex;
	flex-direction: column;
	margin: 2px 0 1px;
	border-right: 1px solid #dfe1e3;
}

.group h2 {
	font-size: 11px;
	font-weight: normal;
	text-align: center;
	color: #444;
}

.tools-row {
	display: flex;
	justify-content: space-around;
	height: 73px;
	padding-top: 5px;
}

.tools-row hr {
	width: 1px;
	height: 56px;
	margin-top: 2px;
	border: 0;
	background-color: #dfe1e3;
}

.clipboard { width: 148px; }
.external { width: 260px; }
.insert { width: 264px; }
.custom { width: 122px; }
.themes { width: 57px; }
.relations { width: 86px; }
.calcs { width: 139px; }
.share { width: 54px; }

.clipboard .tools-row {
	justify-content: flex-start;
	gap: 8px;
	padding-left: 3px;
}

.external .tools-row {
	padding-left: 3px;
	padding-right: 4px;
}

.insert .tools-row {
	padding-left: 3px;
	padding-right: 4px;
}

.big {
	display: flex;
	flex-direction: column;
	align-items: center;
	line-height: 13px;
	white-space: nowrap;
}

.big svg {
	width: 32px;
	height: 34px;
	margin-bottom: 1px;
}

.big span {
	min-height: 13px;
}

.ribbon i, .color i {
	display: inline-block;
	border: 3px solid transparent;
	border-top: 4px solid #252423;
	border-bottom: 0;
	vertical-align: 2px;
}

.muted {
	color: #8a8886;
}

.stack {
	display: flex;
	flex-direction: column;
	gap: 6px;
}

.stack button {
	display: flex;
	align-items: center;
	gap: 3px;
	height: 16px;
	white-space: nowrap;
}

.stack svg {
	width: 16px;
	height: 16px;
}

/* main area */
.body {
	display: flex;
	flex: 1;
	min-height: 0;
}

.views {
	width: 42px;
	padding: 13px 0 0 8px;
	background-color: #f3f2f1;
	border-right: 1px solid #c8c6c4;
}

.views button {
	display: block;
	width: 27px;
	height: 18px;
	margin-bottom: 24px;
}

.views svg {
	width: 18px;
	height: 18px;
	margin: auto;
}

.center {
	display: flex;
	flex-direction: column;
	flex: 1;
	min-width: 0;
}

.work {
	display: flex;
	flex: 1;
	min-height: 0;
}

.canvas {
	flex: 1;
	min-width: 0;
	padding: 0 8px 0 10px;
}

.report {
	position: relative;
	padding-bottom: 66px;
	border: 2px dotted #555;
	border-top: 0;
}

.snap {
	position: absolute;
	width: 100%;
	height: 100%;
}

.top-row, .bottom-row {
	position: relative;
	display: flex;
}

.top-row {
	gap: 27px;
	align-items: flex-end;
	padding-top: 76px;
}

.visual {
	min-width: 0;
	background-color: #fff;
}

.visual h3 {
	padding-left: 4px;
	font: 17px/30px Roboto, sans-serif;
	white-space: nowrap;
}

.gauge {
	flex: 521;
	margin-bottom: 5px;
}

.visual.gauge h3 {
	line-height: 26px;
}

.by-goal {
	flex: 746;
}

.visual.by-goal h3 {
	padding-left: 6px;
}

.bottom-row {
	align-items: flex-end;
}

.goal1 { flex: 307; }
.goal2 { flex: 299; }
.goal3 { flex: 309; }

.detail {
	flex: 379;
	min-width: 0;
}

.detail p {
	width: 90px;
	margin-bottom: 10px;
	padding-left: 2px;
	background-color: #fff;
	font: 14px/20px Roboto, sans-serif;
}

.selected {
	position: relative;
	margin: 0 2px 0 15px;
	border: 1px solid #b3b0ad;
}

.selected header {
	display: flex;
	align-items: center;
	gap: 12px;
	height: 24px;
	padding-right: 4px;
	color: #777;
}

.selected header h3 {
	flex: 1;
	height: 24px;
	padding-left: 3px;
	line-height: 18px;
	color: #252423;
}

.chart-mark {
	inset: -11px -24px -17px -19px;
}

.handle {
	position: absolute;
	width: 9px;
	height: 9px;
	border: 0 solid #999;
}

.tl { left: -2px; top: -2px; border-width: 4px 0 0 4px; }
.tr { right: -2px; top: -2px; border-width: 4px 4px 0 0; }
.bl { left: -2px; bottom: -2px; border-width: 0 0 4px 4px; }
.br { right: -2px; bottom: -2px; border-width: 0 4px 4px 0; }
.tm, .bm { left: 49%; width: 12px; height: 4px; border-width: 4px 0 0; }
.tm { top: -2px; }
.bm { bottom: -2px; }
.ml, .mr { top: 48%; width: 4px; height: 12px; border-width: 0 0 0 4px; }
.ml { left: -2px; }
.mr { right: -2px; }

.chart {
	width: 100%;
	height: auto;
	overflow: visible;
	font-size: 12px;
	fill: #605e5c;
}

.lines {
	stroke: #d0d0d0;
	stroke-dasharray: 1 5;
}

.mid { text-anchor: middle; }
.end { text-anchor: end; }
.white { fill: #fff; }
.bold { font-weight: bold; }
.limit { font-size: 15px; }

.callout {
	font: 300 50px Roboto, sans-serif;
}

.xtitle, .ytitle {
	font: 11px Roboto, sans-serif;
	fill: #252423;
	text-anchor: middle;
}

.large {
	font-size: 14px;
}

.tiny {
	font-size: 6px;
	fill: #4a7bb5;
}

.glyph {
	font: bold 12px "Noto Sans", sans-serif;
	fill: #7ba6d4;
}

.r {
	font-size: 18px;
}

/* filters */
.filters {
	width: 200px;
	padding: 0 12px 0 8px;
	border-left: 1px solid #a8a8a8;
	background-color: #fff;
}

.filters header {
	display: flex;
	align-items: center;
	height: 45px;
	padding-left: 4px;
}

h2 {
	font-size: 15px;
	font-weight: 600;
	color: #444;
}

.filters h2 {
	flex: 1;
	padding-left: 8px;
	color: #252423;
}

.filters .chev-r {
	margin-left: 21px;
}

.filters h4 {
	display: flex;
	justify-content: space-between;
	padding-right: 4px;
	font-weight: normal;
	line-height: 24px;
}

.filters h4 span {
	font-size: 14px;
	color: #605e5c;
}

.card {
	height: 49px;
	margin-bottom: 6px;
	padding: 2px 8px;
	border: 1px solid #c8c6c4;
	border-radius: 2px;
	background-color: #f4f8fe;
	line-height: 21px;
}

.card p {
	white-space: nowrap;
}

.clip {
	width: 130px;
	overflow: hidden;
}

.drop {
	height: 46px;
	padding: 11px 8px;
	background-color: #fff;
	text-align: center;
}

.drop + h4 {
	margin-top: 23px;
}

.open {
	position: relative;
	height: 311px;
	background-color: #f3f2f1;
}

.filter-mark {
	inset: -5px -6px 53px -5px;
}

.type {
	display: flex;
	align-items: center;
	gap: 4px;
	height: 26px;
	padding-top: 2px;
}

.type svg {
	width: 12px;
	height: 12px;
}

.select {
	position: relative;
	width: 165px;
	height: 24px;
	margin-bottom: 4px;
}

.select select {
	width: 100%;
	height: 24px;
	padding-left: 6px;
	border: 1px solid #c8c6c4;
	background-color: #fff;
	appearance: none;
}

.select::after {
	content: "";
	position: absolute;
	right: 6px;
	top: 9px;
	border: 3px solid transparent;
	border-top: 6px solid #000;
	border-bottom: 0;
}

.search {
	display: flex;
	align-items: center;
	height: 30px;
	padding-left: 12px;
	border: 1px solid #c8c6c4;
	border-radius: 2px;
	background-color: #fff;
}

.search svg {
	width: 16px;
	height: 16px;
}

.search input {
	width: 100%;
	min-width: 0;
	padding-left: 7px;
	font-size: 12px;
	outline: none;
}

.search input::placeholder {
	color: #444;
	opacity: 1;
}

.small {
	width: 165px;
	height: 24px;
	padding-left: 4px;
	border-radius: 0;
}

.small svg {
	width: 14px;
	height: 14px;
}

.list {
	width: 153px;
	height: 157px;
	padding-top: 5px;
}

.list label, .single {
	display: flex;
	align-items: center;
	height: 21px;
}

.list span {
	margin-left: auto;
}

.single {
	width: 165px;
	height: 30px;
	padding-top: 3px;
	border-top: 1px solid #c8c6c4;
}

.box {
	display: grid;
	place-items: center;
	width: 11px;
	height: 11px;
	margin-right: 12px;
	border: 1px solid #252423;
	appearance: none;
}

.thin {
	margin-right: 9px;
	border-color: #605e5c;
}

.box.some::after {
	content: "";
	width: 3px;
	height: 3px;
	background-color: #252423;
}

.box:checked::after {
	content: "";
	width: 9px;
	height: 6px;
	border: 2px solid #252423;
	border-width: 0 0 2px 2px;
	transform: rotate(-45deg);
}

/* page tabs */
.pages {
	display: flex;
	height: 35px;
	padding-bottom: 5px;
	background-color: #eaeaea;
}

.arrow {
	width: 18px;
	padding-top: 6px;
}

.arrow svg {
	width: 6px;
	height: 8px;
	margin: auto;
}

.pagetab {
	width: 75px;
	padding-top: 6px;
	background-color: #fff;
	font-size: 12px;
}

.add {
	width: 39px;
	padding-top: 8px;
	background-color: #f2c811;
}

.add svg {
	width: 12px;
	height: 12px;
	margin: auto;
}

/* visualizations */
.viz, .fields {
	width: 181px;
	background-color: #f3f2f1;
	border-left: 1px solid #dcdad8;
	overflow: hidden;
}

.viz header, .fields header {
	display: flex;
	align-items: center;
	justify-content: space-between;
	height: 48px;
	padding: 0 12px;
}

.palette {
	display: grid;
	grid-template-columns: repeat(6, 28px);
	grid-auto-rows: 24px;
	place-items: center;
	height: 149px;
	padding: 2px 0 0 4px;
	border-bottom: 1px solid #dcdad8;
}

.palette svg {
	width: 16px;
	height: 16px;
}

.palette .on {
	width: 22px;
	height: 22px;
	padding: 1px;
	border: 2px solid #605e5c;
	background-color: #c8c6c4;
}

.palette .apps {
	width: 20px;
	height: 20px;
}

.modes {
	display: flex;
	height: 36px;
	margin-bottom: 3px;
	padding-left: 12px;
}

.modes button {
	width: 40px;
	padding-top: 2px;
	border-bottom: 4px solid transparent;
}

.modes .on {
	border-bottom-color: #e8c830;
}

.modes svg {
	width: 20px;
	height: 20px;
	margin: auto;
}

.viz .search {
	margin: 0 5px 4px 4px;
}

.options {
	position: relative;
	border-top: 1px solid #dcdad8;
}

.option {
	display: flex;
	align-items: center;
	height: 36px;
	padding: 3px 24px 0 8px;
	border-bottom: 1px solid #dcdad8;
}

.option .chev {
	margin-right: 7px;
}

.set {
	display: flex;
	align-items: center;
	gap: 5px;
	margin-left: auto;
}

.on-label {
	padding-right: 4px;
}

.toggle {
	position: relative;
	width: 30px;
	height: 12px;
	background: linear-gradient(#605e5c, #605e5c) center / 100% 2px no-repeat;
	appearance: none;
}

.toggle::before {
	content: "";
	position: absolute;
	left: 0;
	width: 12px;
	height: 12px;
	border: 2px solid #605e5c;
	border-radius: 50%;
	background-color: #f3f2f1;
}

.toggle:checked::before {
	left: auto;
	right: 0;
	background-color: #605e5c;
}

.scroll {
	position: absolute;
	right: 0;
	top: 0;
	width: 6px;
	height: 396px;
	border-radius: 3px;
	background-color: rgba(180, 178, 176, .6);
}

.title-form {
	padding: 10px 18px 0 17px;
}

.title-form > label {
	display: block;
	height: 18px;
}

.title-form p {
	height: 21px;
}

.title-form input[type=text] {
	display: block;
	width: 100%;
	height: 24px;
	margin-bottom: 18px;
	padding-left: 6px;
	border: 1px solid #c8c6c4;
	background-color: #fff;
}

.title-form .wrap {
	display: flex;
	align-items: center;
	gap: 5px;
	margin: 7px 0 25px 9px;
}

.color {
	display: flex;
	align-items: center;
	gap: 9px;
	width: 44px;
	height: 24px;
	margin-bottom: 21px;
	padding-left: 4px;
	border: 1px solid #c8c6c4;
	border-radius: 2px;
	background-color: #fff;
}

.color b {
	width: 14px;
	height: 14px;
	border: 1px solid #252423;
}

.color .dark {
	background-color: #252423;
}

.color i {
	border-left-width: 4px;
	border-right-width: 4px;
}

.align {
	display: flex;
	height: 24px;
	margin-bottom: 19px;
}

.align button {
	width: 25px;
}

.align .on {
	background-color: #f2c811;
}

.align svg {
	width: 18px;
	height: 18px;
	margin: auto;
}

/* fields */
.fields .search {
	margin: 4px 0 4px 4px;
}

.tree {
	padding-top: 11px;
	border-top: 1px solid #dcdad8;
}

.tree h3 {
	display: flex;
	align-items: center;
	height: 24px;
	padding-left: 4px;
	margin-bottom: 5px;
	font-size: 12px;
	font-weight: 500;
}

.table {
	width: 20px;
	height: 20px;
	margin: 2px 5px 0 6px;
}

.tree label {
	display: flex;
	align-items: center;
	height: 24px;
	white-space: nowrap;
}

.tree span {
	width: 32px;
	padding-left: 12px;
}

.tree em {
	width: 25px;
	padding-left: 4px;
	font-style: normal;
	font-weight: bold;
	font-size: 12px;
}

.tree em svg {
	width: 12px;
	height: 14px;
}

.tick {
	display: grid;
	place-items: center;
	width: 12px;
	height: 12px;
	border: 1px solid #605e5c;
	border-radius: 2px;
	background-color: #fff;
	appearance: none;
}

.tick:checked {
	border-color: #f2c811;
	background-color: #f2c811;
}

.tick:checked::after {
	content: "";
	width: 7px;
	height: 4px;
	border: 1px solid #252423;
	border-width: 0 0 1px 1px;
	transform: rotate(-45deg);
}
```
